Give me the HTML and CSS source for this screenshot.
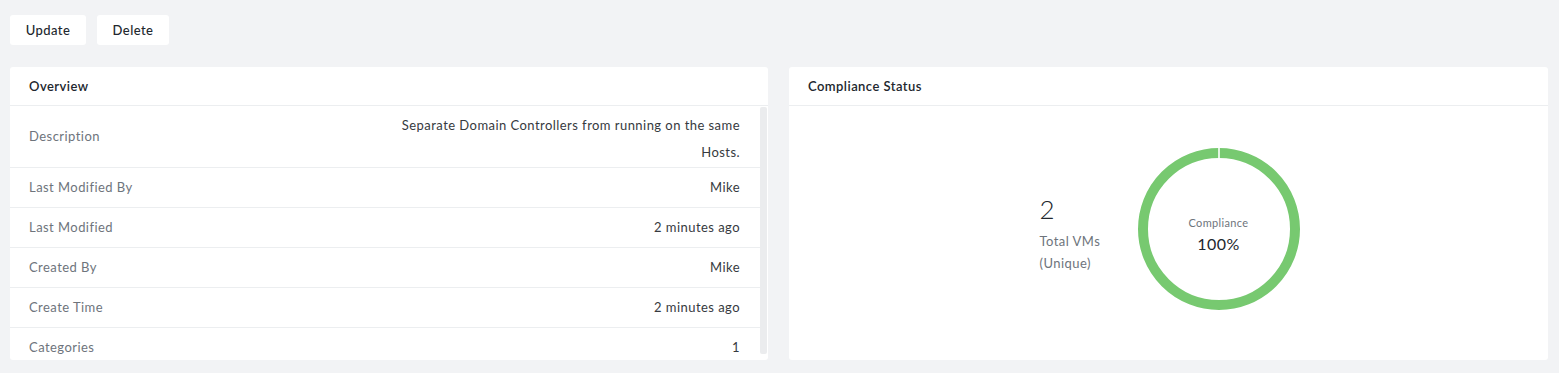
FILE: index.html
```html
<!DOCTYPE html>
<html lang="en">
<head>
<meta charset="utf-8">
<title>Policy details</title>
<link rel="stylesheet" href="styles.css">
</head>
<body>
<div class="page">
  <div class="actions">
    <button class="btn">Update</button>
    <button class="btn">Delete</button>
  </div>
  <div class="panels">
    <section class="panel">
      <header class="panel-head">Overview</header>
      <div class="panel-body scroll">
        <div class="rows">
          <div class="row row-desc">
            <div class="label">Description</div>
            <div class="value value-multi">Separate Domain Controllers from running on the same<br>Hosts.</div>
          </div>
          <div class="row"><div class="label">Last Modified By</div><div class="value">Mike</div></div>
          <div class="row"><div class="label">Last Modified</div><div class="value">2 minutes ago</div></div>
          <div class="row"><div class="label">Created By</div><div class="value">Mike</div></div>
          <div class="row"><div class="label">Create Time</div><div class="value">2 minutes ago</div></div>
          <div class="row"><div class="label">Categories</div><div class="value">1</div></div>
        </div>
        <div class="track"><div class="thumb"></div></div>
      </div>
    </section>
    <section class="panel">
      <header class="panel-head">Compliance Status</header>
      <div class="panel-body chart-body">
        <div class="stat">
          <div class="stat-num">2</div>
          <div class="stat-label">Total VMs<br>(Unique)</div>
        </div>
        <div class="donut">
          <svg width="162" height="162" viewBox="0 0 162 162">
            <circle cx="81" cy="81" r="76" fill="none" stroke="#77c970" stroke-width="10"/>
            <rect x="80.2" y="0" width="1.6" height="12" fill="#ffffff"/>
          </svg>
          <div class="donut-center">
            <div class="donut-label">Compliance</div>
            <div class="donut-value">100%</div>
          </div>
        </div>
      </div>
    </section>
  </div>
</div>
</body>
</html>
```
FILE: styles.css
```css
* { box-sizing: border-box; }
html, body { margin: 0; padding: 0; }
body {
  background: #f2f3f5;
  font-family: Lato, "Open Sans", sans-serif;
  color: #22272e;
  width: 1559px;
  height: 373px;
  overflow: hidden;
  letter-spacing: 0.45px;
}
.page {
  padding: 15px 11px 0 10px;
}
.actions {
  display: flex;
  gap: 11px;
}
.btn {
  height: 30px;
  padding: 0;
  background: #ffffff;
  border: none;
  border-radius: 3px;
  font-family: inherit;
  font-size: 13px;
  font-weight: 500;
  letter-spacing: 0.45px;
  color: #22272e;
}
.btn:first-child { width: 76px; }
.btn:last-child { width: 72px; }
.panels {
  display: grid;
  grid-template-columns: 758px 759px;
  gap: 21px;
  margin-top: 22px;
}
.panel {
  background: #ffffff;
  border-radius: 3px;
  height: 293px;
  display: flex;
  flex-direction: column;
  overflow: hidden;
}
.panel-head {
  height: 39px;
  flex: none;
  display: flex;
  align-items: center;
  padding-left: 19px;
  padding-bottom: 1px;
  font-size: 13px;
  font-weight: 600;
  color: #22272e;
  border-bottom: 1px solid #eceef0;
}
.panel-body {
  flex: 1;
  min-height: 0;
}
.scroll {
  display: flex;
  overflow: hidden;
}
.rows {
  flex: 1;
  min-width: 0;
}
.row {
  height: 40px;
  display: flex;
  align-items: center;
  justify-content: space-between;
  padding: 0 20px 1px 19px;
  border-bottom: 1px solid #eceef0;
  font-size: 13px;
}
.row-desc { height: 62px; }
.label { color: #6e747c; }
.value { color: #363a40; text-align: right; }
.value-multi { line-height: 27px; padding-top: 5px; }
.track {
  width: 8px;
  flex: none;
  padding: 1px 0 7px;
}
.thumb {
  height: 247px;
  width: 7px;
  background: #ebecee;
  border-radius: 2px;
}
.chart-body {
  display: flex;
  align-items: center;
  justify-content: center;
  gap: 46px;
  padding: 0 0 8px 2px;
}
.stat {
  width: 52px;
  padding-top: 9px;
}
.stat-num {
  font-size: 26px;
  font-weight: 300;
  color: #22272e;
  line-height: 30px;
  margin-bottom: 6px;
}
.stat-label {
  font-size: 13px;
  line-height: 22px;
  color: #6e747c;
  white-space: nowrap;
}
.donut {
  position: relative;
  width: 162px;
  height: 162px;
}
.donut svg { display: block; }
.donut-center {
  position: absolute;
  inset: 0;
  display: flex;
  flex-direction: column;
  align-items: center;
  justify-content: center;
  padding-top: 13px;
}
.donut-label {
  font-size: 11px;
  color: #6e747c;
  line-height: 16px;
  letter-spacing: 0.35px;
}
.donut-value {
  font-size: 16px;
  color: #22272e;
  line-height: 24px;
  margin-top: 1px;
}
```
